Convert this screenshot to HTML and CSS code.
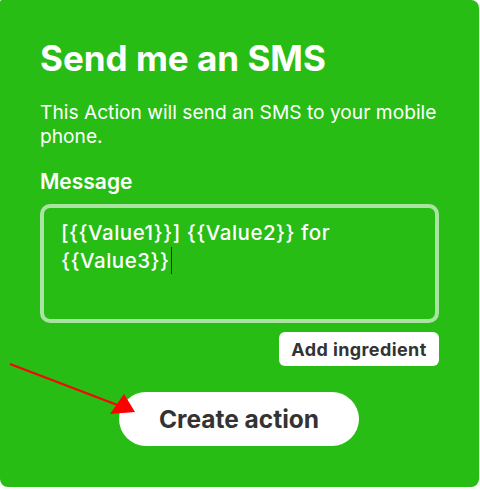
FILE: index.html
```html
<!DOCTYPE html>
<html>
<head>
<meta charset="utf-8">
<link rel="stylesheet" href="styles.css">
</head>
<body>
<div class="card">
  <h1 class="title">Send me an SMS</h1>
  <p class="desc">This Action will send an SMS to your mobile phone.</p>
  <label class="label">Message</label>
  <div class="field">[{{Value1}}] {{Value2}} for <span class="last">{{Value3}}<span class="caret"></span></span></div>
  <div class="row"><button class="ingredient">Add ingredient</button></div>
  <div class="row center"><button class="create">Create action</button></div>
  <svg class="arrow" width="140" height="420" viewBox="0 0 140 420">
    <line x1="10" y1="364" x2="120" y2="406" stroke="#ff0000" stroke-width="2"/>
    <polygon points="135,412 110,414 124,394" fill="#ff0000"/>
  </svg>
</div>
</body>
</html>
```
FILE: styles.css
```css
* { box-sizing: border-box; }
html, body { margin: 0; padding: 0; background: #ffffff; }
body { font-family: "Inter", "Lato", sans-serif; }
.card {
  position: relative;
  width: 479px;
  height: 487px;
  background: #27bd15;
  border-radius: 2px 8px 8px 8px;
  padding: 0 40px;
  color: #ffffff;
}
.title {
  margin: 0;
  padding-top: 36px;
  font-size: 35px;
  font-weight: 700;
  line-height: 44px;
}
.desc {
  margin: 20px 0 0;
  font-size: 19.2px;
  line-height: 24px;
  font-weight: 400;
}
.label {
  display: block;
  margin-top: 22px;
  font-size: 21px;
  font-weight: 600;
  line-height: 24px;
}
.field {
  margin-top: 10px;
  height: 119px;
  border: 4px solid #abe3a2;
  border-radius: 10px;
  padding: 11px 17px;
  font-size: 20.5px;
  font-weight: 500;
  letter-spacing: 0.5px;
  line-height: 28px;
}
.last { white-space: nowrap; }
.caret {
  display: inline-block;
  width: 1px;
  height: 27px;
  margin-left: 1px;
  background: #222222;
  vertical-align: -6px;
}
.row { display: flex; justify-content: flex-end; margin-top: 9px; }
.row.center { justify-content: flex-start; margin-top: 26px; padding-left: 79px; }
.ingredient {
  width: 160px;
  height: 34px;
  border: none;
  border-radius: 6px;
  background: #ffffff;
  color: #333333;
  font-family: "Inter", sans-serif;
  font-weight: 700;
  font-size: 18px;
  letter-spacing: 0.4px;
  padding: 0;
}
.create {
  width: 240px;
  height: 54px;
  border: none;
  border-radius: 27px;
  background: #ffffff;
  color: #333333;
  font-family: "Inter", sans-serif;
  font-weight: 700;
  font-size: 24.5px;
  padding: 0;
}
.arrow { position: absolute; left: 0; top: 0; pointer-events: none; }
```
